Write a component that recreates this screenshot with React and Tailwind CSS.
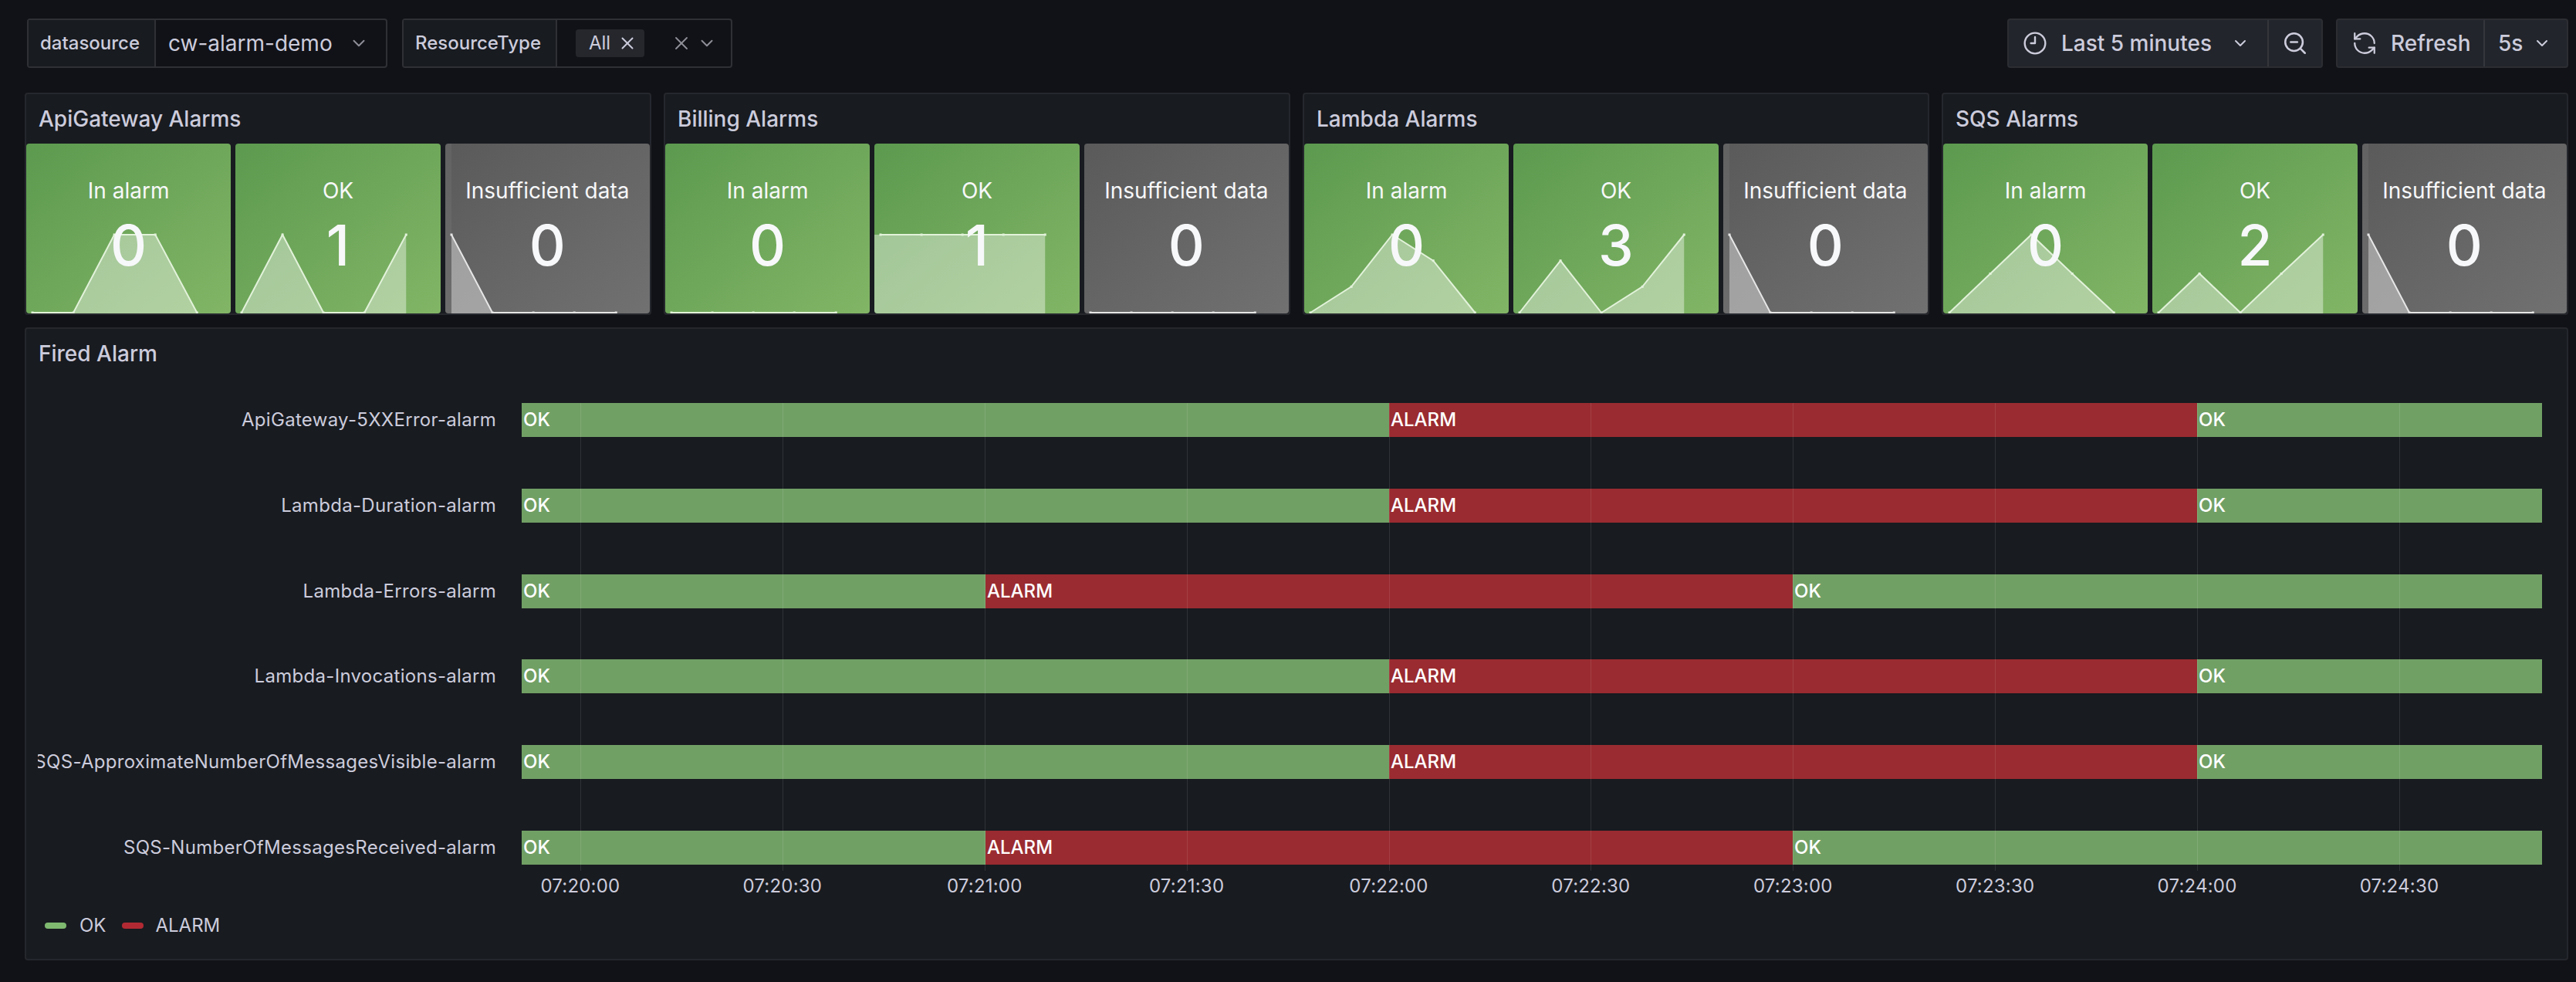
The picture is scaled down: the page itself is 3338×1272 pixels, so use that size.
import { ChevronDown, Clock9, RefreshCcw, X, ZoomOut } from "lucide-react";

const groups = [
  {
    title: "ApiGateway Alarms",
    cards: [
      { label: "In alarm", value: "0", line: [0, 0, 1, 1, 0] },
      { label: "OK", value: "1", line: [0, 1, 0, 0, 1] },
      { label: "Insufficient data", value: "0", grey: true, line: [1, 0, 0, 0, 0] },
    ],
  },
  {
    title: "Billing Alarms",
    cards: [
      { label: "In alarm", value: "0", line: [0, 0, 0, 0, 0] },
      { label: "OK", value: "1", line: [1, 1, 1, 1, 1] },
      { label: "Insufficient data", value: "0", grey: true, line: [0, 0, 0, 0, 0] },
    ],
  },
  {
    title: "Lambda Alarms",
    cards: [
      { label: "In alarm", value: "0", line: [0, 1 / 3, 1, 2 / 3, 0] },
      { label: "OK", value: "3", line: [0, 2 / 3, 0, 1 / 3, 1] },
      { label: "Insufficient data", value: "0", grey: true, line: [1, 0, 0, 0, 0] },
    ],
  },
  {
    title: "SQS Alarms",
    cards: [
      { label: "In alarm", value: "0", line: [0, 0.5, 1, 0.5, 0] },
      { label: "OK", value: "2", line: [0, 0.5, 0, 0.5, 1] },
      { label: "Insufficient data", value: "0", grey: true, line: [1, 0, 0, 0, 0] },
    ],
  },
];

const lateRow = [
  { state: "OK", w: "w-[1124px]" },
  { state: "ALARM", w: "w-[1047px]" },
  { state: "OK", w: "w-[447px]" },
];

const earlyRow = [
  { state: "OK", w: "w-[601px]" },
  { state: "ALARM", w: "w-[1046px]" },
  { state: "OK", w: "w-[971px]" },
];

const alarms = [
  { name: "ApiGateway-5XXError-alarm", segments: lateRow },
  { name: "Lambda-Duration-alarm", segments: lateRow },
  { name: "Lambda-Errors-alarm", segments: earlyRow },
  { name: "Lambda-Invocations-alarm", segments: lateRow },
  { name: "SQS-ApproximateNumberOfMessagesVisible-alarm", segments: lateRow },
  { name: "SQS-NumberOfMessagesReceived-alarm", segments: earlyRow },
];

const ticks = [
  "07:20:00",
  "07:20:30",
  "07:21:00",
  "07:21:30",
  "07:22:00",
  "07:22:30",
  "07:23:00",
  "07:23:30",
  "07:24:00",
  "07:24:30",
];

function Sparkline({ line, grey }) {
  const xs = [8, 61, 114, 167, 221];
  const ys = line.map((v) => 219 - v * 101);
  const points = xs.map((x, i) => `${x},${ys[i]}`).join(" ");
  const flat = line.every((v) => v === 1);
  const startX = flat ? 0 : xs[0];
  const stroke = grey ? "#e6e6e6" : "#e2f2da";

  return (
    <svg className="absolute inset-0 h-full w-full" viewBox="0 0 265 220" preserveAspectRatio="none">
      {grey && line[0] === 1 ? <rect x="0" y="0" width="8" height="220" fill="#ffffff" fillOpacity="0.05" /> : null}
      <polygon points={`${startX},220 ${startX},${ys[0]} ${points} 221,220`} fill="#ffffff" fillOpacity="0.4" />
      <polyline points={points} fill="none" stroke={stroke} strokeWidth="2" />
      {xs.map((x, i) => (
        <rect key={x} x={x - 1.5} y={ys[i] - 1.5} width="3" height="3" fill={stroke} />
      ))}
    </svg>
  );
}

function StatCard({ label, value, grey, line }) {
  return (
    <div
      className={`relative h-[220px] flex-1 overflow-hidden rounded-[4px] bg-gradient-to-br ${
        grey ? "from-[#5a5a5a] to-[#717171]" : "from-[#5c9a4f] to-[#82b566]"
      }`}
    >
      <Sparkline line={line} grey={grey} />
      <div className="relative flex flex-col items-center pt-[44px] text-[#f7f8fa]">
        <div className="h-[34px] text-[28px] leading-[34px]">{label}</div>
        <div className="mt-[16px] text-[73px] leading-[76px] font-medium">{value}</div>
      </div>
    </div>
  );
}

function AlarmGroup({ title, cards }) {
  return (
    <section className="rounded-[4px] border-2 border-[#25272d] bg-[#181b20]">
      <h2 className="flex h-[64px] items-center px-[16px] text-[28px] font-medium text-[#ccccdc]">{title}</h2>
      <div className="flex gap-[6px]">
        {cards.map((card) => (
          <StatCard key={card.label} {...card} />
        ))}
      </div>
    </section>
  );
}

function Timeline() {
  return (
    <div className="mt-[32px] flex flex-col">
      <div className="flex items-stretch pl-[15px]">
        <div className="flex w-[594px] flex-col gap-[66.8px] overflow-hidden">
          {alarms.map((alarm) => (
            <div
              key={alarm.name}
              className="flex h-[44px] items-center justify-end text-[24px] tracking-[0.3px] whitespace-nowrap text-[#ccccdc]"
            >
              {alarm.name}
            </div>
          ))}
        </div>
        <div className="relative ml-[33px] flex w-[2618px] flex-col gap-[66.8px]">
          {alarms.map((alarm) => (
            <div key={alarm.name} className="flex h-[44px]">
              {alarm.segments.map((seg, i) => (
                <div
                  key={i}
                  className={`${seg.w} flex items-center pl-[2px] text-[24px] font-medium text-white ${
                    seg.state === "OK" ? "bg-[#71a065]" : "bg-[#9a2b30]"
                  }`}
                >
                  {seg.state}
                </div>
              ))}
            </div>
          ))}
          {/* grid lines sit over the bars, they show through faintly */}
          <div className="absolute top-0 bottom-[-8px] left-[76px] flex">
            {ticks.map((t) => (
              <div key={t} className="w-[261.9px] border-l border-white/10" />
            ))}
          </div>
        </div>
      </div>
      <div className="mt-[10px] ml-[587px] flex h-[36px] items-center">
        {ticks.map((t) => (
          <div key={t} className="w-[261.9px] text-center text-[24px] tracking-[0.2px] text-[#ccccdc]">
            {t}
          </div>
        ))}
      </div>
      <div className="mt-[15px] ml-[24px] flex h-[36px] items-center text-[24px] text-[#ccccdc]">
        <span className="h-[8px] w-[28px] rounded-full bg-[#7eb96f]" />
        <span className="ml-[17px]">OK</span>
        <span className="ml-[21px] h-[8px] w-[28px] rounded-full bg-[#b12a33]" />
        <span className="ml-[15px]">ALARM</span>
      </div>
    </div>
  );
}

export default function App() {
  return (
    <div className="h-[1272px] overflow-hidden bg-[#111217] pt-[24px] pr-[10px] pl-[32px] font-['Inter',sans-serif]">
      <header className="flex h-[64px] items-stretch justify-between pl-[3px]">
        <div className="flex gap-[19px] text-[#ccccdc]">
          <div className="flex rounded-[4px] border-2 border-[#2f3036] bg-[#111217]">
            <div className="flex w-[165px] items-center border-r-2 border-[#2f3036] bg-[#181b20] pl-[15px] text-[24px] font-medium">
              datasource
            </div>
            <div className="flex w-[298px] items-center pl-[16px] text-[28px]">
              <span>cw-alarm-demo</span>
              <ChevronDown size={26} strokeWidth={1.8} className="ml-[21px] text-[#8e8f98]" />
            </div>
          </div>
          <div className="flex rounded-[4px] border-2 border-[#2f3036] bg-[#111217]">
            <div className="flex w-[199px] items-center border-r-2 border-[#2f3036] bg-[#181b20] pl-[15px] text-[24px] font-medium">
              ResourceType
            </div>
            <div className="flex w-[225px] items-center pl-[24px]">
              <div className="flex h-[36px] w-[89px] items-center rounded-[4px] bg-[#25272d] pl-[17px] text-[24px]">
                All
                <X size={26} strokeWidth={1.8} className="ml-[9px]" />
              </div>
              <X size={28} strokeWidth={1.6} className="ml-[34px] text-[#8e8f98]" />
              <ChevronDown size={26} strokeWidth={1.8} className="ml-[6px] text-[#8e8f98]" />
            </div>
          </div>
        </div>
        <div className="flex gap-[17px] text-[28px] font-medium text-[#ccccdc]">
          <div className="flex rounded-[4px] border-2 border-[#2b2d33] bg-[#22252b]">
            <div className="flex w-[337px] items-center border-r-2 border-[#34363c] pl-[18px]">
              <Clock9 size={32} strokeWidth={1.8} />
              <span className="ml-[18px]">Last 5 minutes</span>
              <ChevronDown size={24} strokeWidth={2} className="ml-[25px]" />
            </div>
            <div className="flex w-[68px] items-center justify-center">
              <ZoomOut size={34} strokeWidth={1.8} />
            </div>
          </div>
          <div className="flex rounded-[4px] border-2 border-[#2b2d33] bg-[#22252b]">
            <div className="flex w-[191px] items-center border-r-2 border-[#34363c] pl-[18px]">
              <RefreshCcw size={34} strokeWidth={1.6} />
              <span className="ml-[17px]">Refresh</span>
            </div>
            <div className="flex w-[106px] items-center pl-[17px]">
              <span>5s</span>
              <ChevronDown size={24} strokeWidth={2} className="ml-[13px]" />
            </div>
          </div>
        </div>
      </header>

      <div className="mt-[32px] grid grid-cols-4 gap-[16px]">
        {groups.map((g) => (
          <AlarmGroup key={g.title} {...g} />
        ))}
      </div>

      <section className="mt-[16px] h-[820px] rounded-[4px] border-2 border-[#25272d] bg-[#181b20]">
        <h2 className="flex h-[64px] items-center px-[16px] text-[28px] font-medium text-[#ccccdc]">Fired Alarm</h2>
        <Timeline />
      </section>
    </div>
  );
}
